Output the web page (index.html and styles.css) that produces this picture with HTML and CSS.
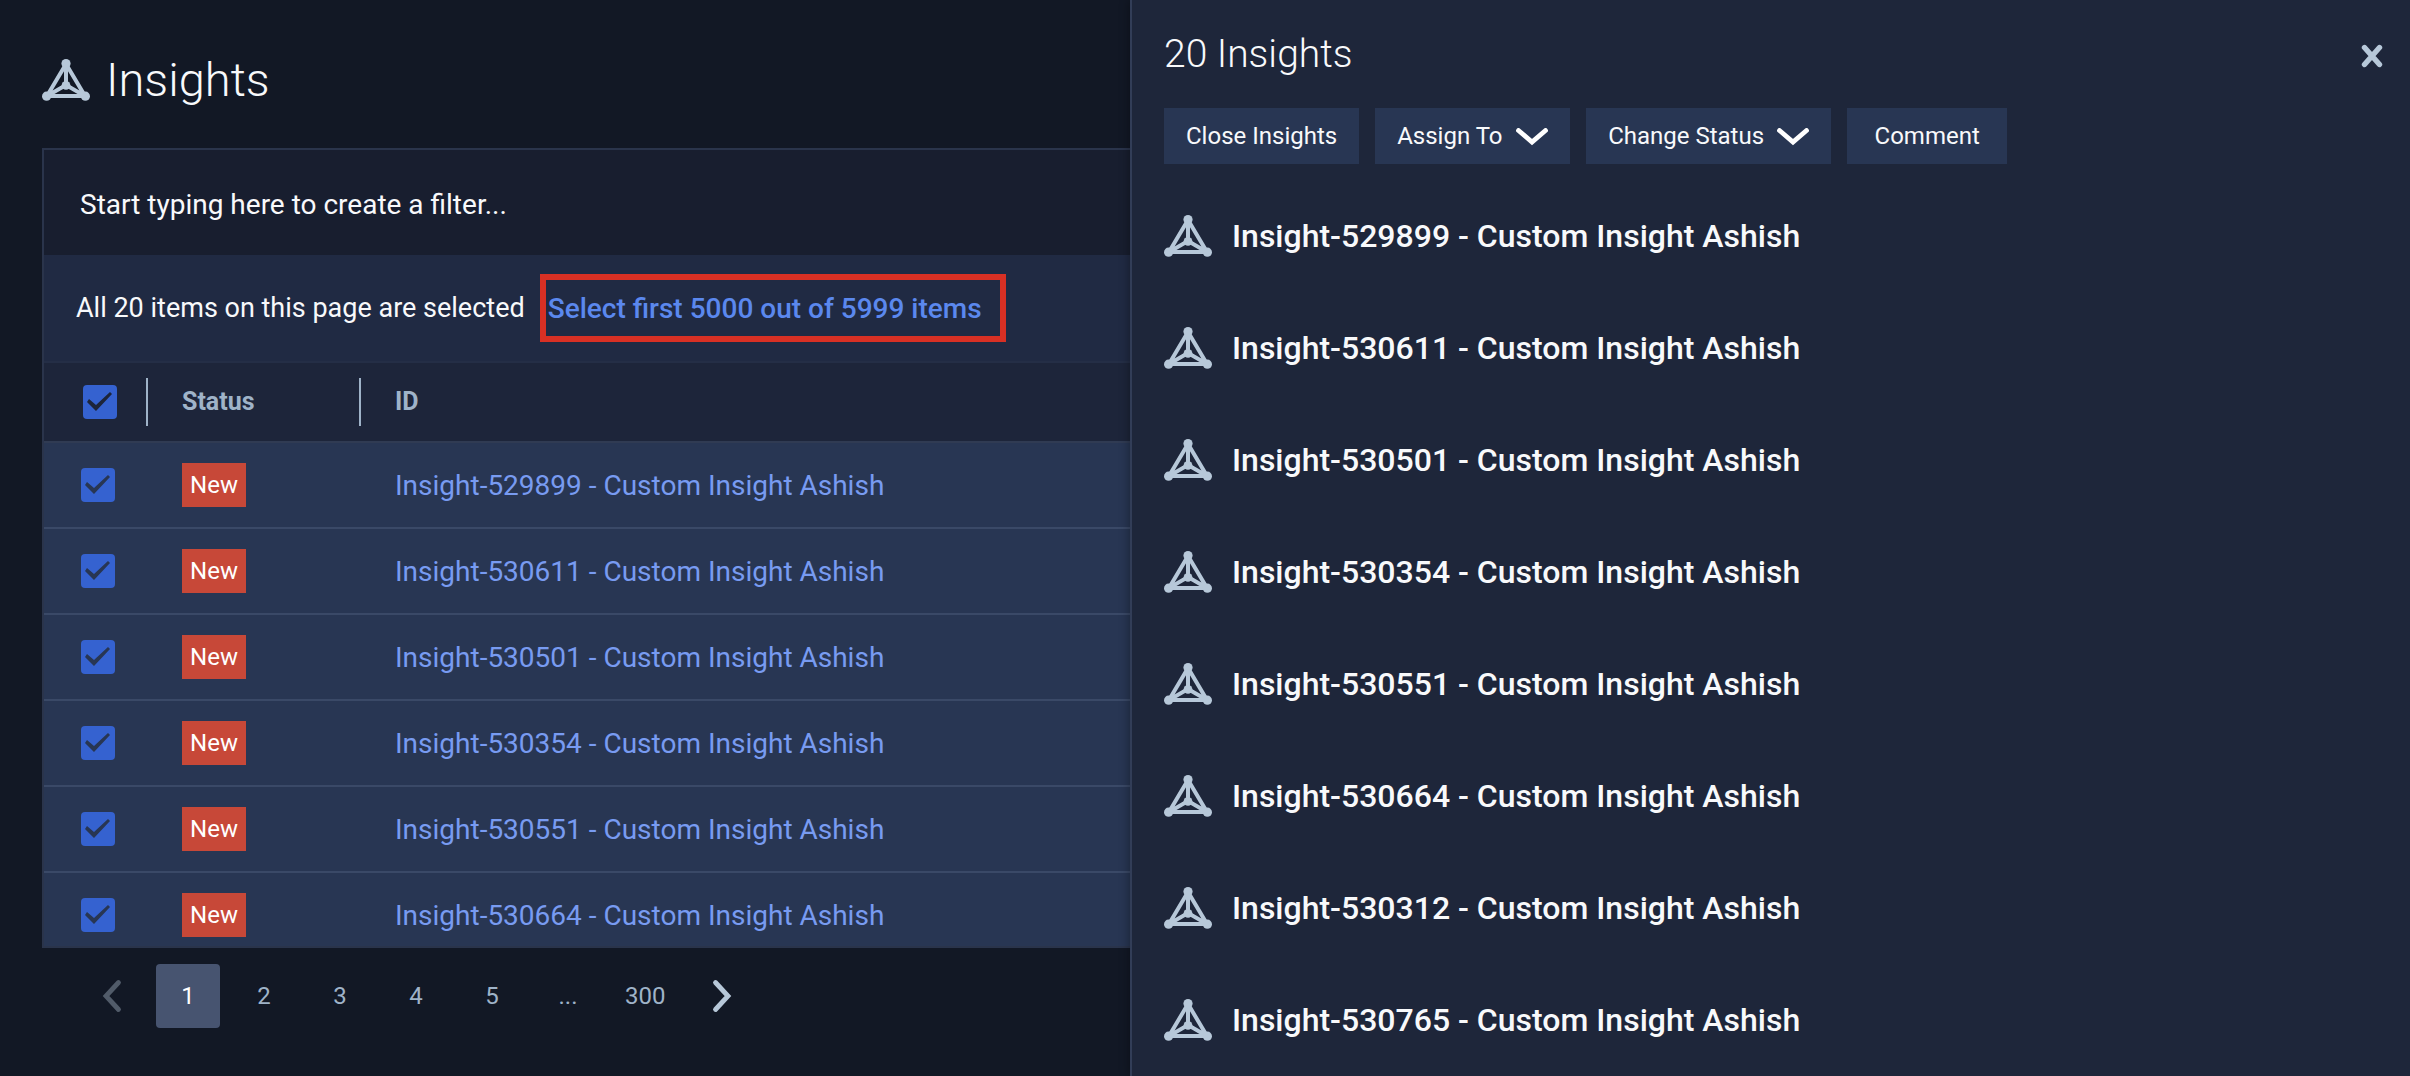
FILE: index.html
```html
<!DOCTYPE html>
<html lang="en">
<head>
    <meta charset="UTF-8">
    <meta name="viewport" content="width=device-width, initial-scale=1.0">
    <title>Insights</title>
    <link rel="stylesheet" href="styles.css">
</head>
<body>
    <svg class="sprite" aria-hidden="true">
        <symbol id="icon-insight" viewBox="0 0 48 42">
            <path d="M24 5 L5 37 H43 Z M24 5 V26 M5 37 L24 26 L43 37" fill="none" stroke="currentColor" stroke-width="4"/>
            <g fill="currentColor">
                <circle cx="24" cy="4.6" r="4.6"/>
                <circle cx="4.6" cy="37.2" r="4.6"/>
                <circle cx="43.4" cy="37.2" r="4.6"/>
                <circle cx="24" cy="26.4" r="4.4"/>
            </g>
        </symbol>
        <symbol id="icon-down" viewBox="0 0 32 18">
            <path d="M2.5 2.5 L16 14 L29.5 2.5" fill="none" stroke="currentColor" stroke-width="4.8" stroke-linecap="round"/>
        </symbol>
        <symbol id="icon-left" viewBox="0 0 20 34">
            <path d="M16.5 3.5 L4 17 L16.5 30.5" fill="none" stroke="currentColor" stroke-width="4.8" stroke-linecap="round"/>
        </symbol>
        <symbol id="icon-right" viewBox="0 0 20 34">
            <path d="M3.5 3.5 L16 17 L3.5 30.5" fill="none" stroke="currentColor" stroke-width="4.8" stroke-linecap="round"/>
        </symbol>
        <symbol id="icon-close" viewBox="0 0 22 24">
            <path d="M3.5 3.5 L18.5 20.5 M18.5 3.5 L3.5 20.5" fill="none" stroke="currentColor" stroke-width="5.4" stroke-linecap="round"/>
        </symbol>
    </svg>

    <div class="layout">
        <main class="main">
            <header class="page-header">
                <svg class="insight-icon" aria-hidden="true"><use href="#icon-insight"/></svg>
                <h1>Insights</h1>
            </header>

            <section class="list-box">
                <input type="text" class="filter" aria-label="Filter" placeholder="Start typing here to create a filter...">

                <div class="selection-bar">
                    <span class="selection-text">All 20 items on this page are selected</span>
                    <span class="highlight"><a href="#">Select first 5000 out of 5999 items</a></span>
                </div>

                <div class="table-wrap">
                    <table>
                        <thead>
                            <tr>
                                <th class="col-check"><input type="checkbox" aria-label="Select all" checked></th>
                                <th class="col-status"><span class="divider">Status</span></th>
                                <th><span class="divider">ID</span></th>
                            </tr>
                        </thead>
                        <tbody>
                            <tr>
                                <td class="col-check"><input type="checkbox" aria-label="Select Insight-529899" checked></td>
                                <td><span class="badge">New</span></td>
                                <td><a href="#">Insight-529899 - Custom Insight Ashish</a></td>
                            </tr>
                            <tr>
                                <td class="col-check"><input type="checkbox" aria-label="Select Insight-530611" checked></td>
                                <td><span class="badge">New</span></td>
                                <td><a href="#">Insight-530611 - Custom Insight Ashish</a></td>
                            </tr>
                            <tr>
                                <td class="col-check"><input type="checkbox" aria-label="Select Insight-530501" checked></td>
                                <td><span class="badge">New</span></td>
                                <td><a href="#">Insight-530501 - Custom Insight Ashish</a></td>
                            </tr>
                            <tr>
                                <td class="col-check"><input type="checkbox" aria-label="Select Insight-530354" checked></td>
                                <td><span class="badge">New</span></td>
                                <td><a href="#">Insight-530354 - Custom Insight Ashish</a></td>
                            </tr>
                            <tr>
                                <td class="col-check"><input type="checkbox" aria-label="Select Insight-530551" checked></td>
                                <td><span class="badge">New</span></td>
                                <td><a href="#">Insight-530551 - Custom Insight Ashish</a></td>
                            </tr>
                            <tr>
                                <td class="col-check"><input type="checkbox" aria-label="Select Insight-530664" checked></td>
                                <td><span class="badge">New</span></td>
                                <td><a href="#">Insight-530664 - Custom Insight Ashish</a></td>
                            </tr>
                        </tbody>
                    </table>
                </div>
            </section>

            <nav class="pagination" aria-label="Pages">
                <button class="arrow" aria-label="Previous page" disabled><svg><use href="#icon-left"/></svg></button>
                <button class="active">1</button>
                <button>2</button>
                <button>3</button>
                <button>4</button>
                <button>5</button>
                <span>...</span>
                <button>300</button>
                <button class="arrow" aria-label="Next page"><svg><use href="#icon-right"/></svg></button>
            </nav>
        </main>

        <aside class="drawer">
            <header class="drawer-header">
                <h2>20 Insights</h2>
                <button class="close" aria-label="Close"><svg><use href="#icon-close"/></svg></button>
            </header>

            <div class="actions">
                <button class="action">Close Insights</button>
                <div class="dropdown">
                    <select class="action" aria-label="Assign To">
                        <option>Assign To</option>
                    </select>
                    <svg aria-hidden="true"><use href="#icon-down"/></svg>
                </div>
                <div class="dropdown">
                    <select class="action" aria-label="Change Status">
                        <option>Change Status</option>
                    </select>
                    <svg aria-hidden="true"><use href="#icon-down"/></svg>
                </div>
                <button class="action">Comment</button>
            </div>

            <ul class="insights">
                <li><svg class="insight-icon" aria-hidden="true"><use href="#icon-insight"/></svg>Insight-529899 - Custom Insight Ashish</li>
                <li><svg class="insight-icon" aria-hidden="true"><use href="#icon-insight"/></svg>Insight-530611 - Custom Insight Ashish</li>
                <li><svg class="insight-icon" aria-hidden="true"><use href="#icon-insight"/></svg>Insight-530501 - Custom Insight Ashish</li>
                <li><svg class="insight-icon" aria-hidden="true"><use href="#icon-insight"/></svg>Insight-530354 - Custom Insight Ashish</li>
                <li><svg class="insight-icon" aria-hidden="true"><use href="#icon-insight"/></svg>Insight-530551 - Custom Insight Ashish</li>
                <li><svg class="insight-icon" aria-hidden="true"><use href="#icon-insight"/></svg>Insight-530664 - Custom Insight Ashish</li>
                <li><svg class="insight-icon" aria-hidden="true"><use href="#icon-insight"/></svg>Insight-530312 - Custom Insight Ashish</li>
                <li><svg class="insight-icon" aria-hidden="true"><use href="#icon-insight"/></svg>Insight-530765 - Custom Insight Ashish</li>
            </ul>
        </aside>
    </div>
</body>
</html>
```
FILE: styles.css
```css
* {
    box-sizing: border-box;
}

body {
    margin: 0;
    font-family: Roboto, "Liberation Sans", sans-serif;
    font-size: 28px;
    color: #f8f9fb;
    background-color: #121825;
}

button, input, select {
    font-family: inherit;
    color: inherit;
    border: none;
    border-radius: 0;
    margin: 0;
}

button, select {
    cursor: pointer;
}

a {
    text-decoration: none;
}

.sprite {
    display: none;
}

.insight-icon {
    width: 48px;
    height: 42px;
    color: #b7c8d9;
    flex-shrink: 0;
}

.layout {
    display: grid;
    grid-template-columns: minmax(0, 113fr) minmax(0, 128fr);
    height: 100vh;
}

/* left side */
.main {
    display: flex;
    flex-direction: column;
    min-height: 0;
    padding-left: 42px;
}

.page-header {
    display: flex;
    align-items: center;
    gap: 16px;
    padding: 48px 0 36px;
}

h1 {
    margin: 0;
    font-size: 47px;
    font-weight: 300;
    line-height: 64px;
}

.list-box {
    display: flex;
    flex-direction: column;
    flex: 1;
    min-height: 0;
    border: 2px solid #2a344b;
    border-right: none;
}

.filter {
    flex: none;
    width: 100%;
    height: 105px;
    padding: 4px 36px 0;
    font-size: 28px;
    background-color: #181e2f;
    outline: none;
}

.filter::placeholder {
    color: #f8f9fb;
    opacity: 1;
}

.selection-bar {
    display: flex;
    align-items: center;
    flex: none;
    gap: 15px;
    height: 108px;
    padding-left: 32px;
    background-color: #202a43;
    border-bottom: 2px solid #242e46;
    white-space: nowrap;
}

.selection-text {
    font-size: 27px;
}

.highlight {
    display: flex;
    align-items: center;
    height: 68px;
    padding: 0 18px 0 2px;
    border: 6px solid #d83024;
}

.highlight a {
    color: #5b88ee;
    font-weight: 500;
}

.table-wrap {
    flex: 1;
    min-height: 0;
    overflow: hidden;
}

table {
    width: 100%;
    table-layout: fixed;
    border-collapse: separate;
    border-spacing: 0;
}

th {
    height: 80px;
    padding: 0;
    background-color: #1d253a;
    border-bottom: 2px solid #303b53;
    color: #9fb3c8;
    font-size: 25px;
    font-weight: 700;
    text-align: left;
}

td {
    height: 86px;
    padding: 0 0 0 36px;
    background-color: #283653;
    border-bottom: 2px solid #3a4967;
    white-space: nowrap;
}

td a {
    color: #789bf1;
}

.col-check {
    width: 102px;
    padding: 0 0 0 37px;
}

th.col-check {
    padding-left: 39px;
}

.col-status {
    width: 213px;
}

.divider {
    display: block;
    height: 48px;
    padding-left: 34px;
    border-left: 2px solid #9fb3c8;
    line-height: 48px;
}

input[type="checkbox"] {
    appearance: none;
    display: block;
    width: 34px;
    height: 34px;
    border-radius: 4px;
    background-color: #3562d0;
}

input[type="checkbox"]:checked::after {
    content: "";
    display: block;
    width: 34px;
    height: 34px;
    background-color: #283653;
    clip-path: polygon(4px 17px, 6px 14px, 13px 20px, 27px 7px, 29px 9px, 13px 26px);
}

th input[type="checkbox"]:checked::after {
    background-color: #1d253a;
}

.badge {
    display: block;
    width: 64px;
    background-color: #c74838;
    color: #fff;
    font-size: 24px;
    line-height: 44px;
    text-align: center;
}

.pagination {
    display: flex;
    gap: 12px;
    padding: 16px 0 48px 38px;
}

.pagination button,
.pagination span {
    min-width: 64px;
    height: 64px;
    padding: 0 13px;
    border-radius: 4px;
    background: none;
    color: #9fb3c8;
    font-size: 24px;
    line-height: 64px;
    text-align: center;
}

.pagination .active {
    background-color: #475470;
    color: #fff;
}

.pagination .arrow {
    display: flex;
    align-items: center;
    justify-content: center;
    color: #b7c8d9;
}

.pagination .arrow:disabled {
    color: #515b69;
}

.pagination svg {
    width: 20px;
    height: 34px;
}

/* right side */
.drawer {
    min-height: 0;
    overflow: hidden;
    padding: 28px 18px 0 32px;
    background-color: #1e263a;
    border-left: 2px solid #323d57;
    box-shadow: 0 0 10px rgba(0, 0, 0, 0.4);
}

.drawer-header {
    display: flex;
    justify-content: space-between;
    margin-bottom: 24px;
}

h2 {
    margin: 0;
    font-size: 39px;
    font-weight: 300;
    line-height: 52px;
}

.close {
    display: flex;
    align-items: center;
    justify-content: center;
    width: 40px;
    height: 56px;
    padding: 0;
    background: none;
    color: #b7c8d9;
}

.close svg {
    width: 22px;
    height: 24px;
}

.actions {
    display: flex;
    gap: 16px;
    margin-bottom: 16px;
}

.action {
    height: 56px;
    min-width: 160px;
    padding: 0 22px;
    background-color: #283653;
    font-size: 24px;
}

.dropdown {
    position: relative;
}

.dropdown select {
    appearance: none;
    padding-right: 67px;
}

.dropdown svg {
    position: absolute;
    top: 20px;
    right: 22px;
    width: 32px;
    height: 18px;
    color: #fff;
    pointer-events: none;
}

.insights {
    list-style: none;
    margin: 0;
    padding: 0;
}

.insights li {
    display: flex;
    align-items: center;
    gap: 20px;
    height: 112px;
    font-size: 32px;
    font-weight: 500;
}
```
